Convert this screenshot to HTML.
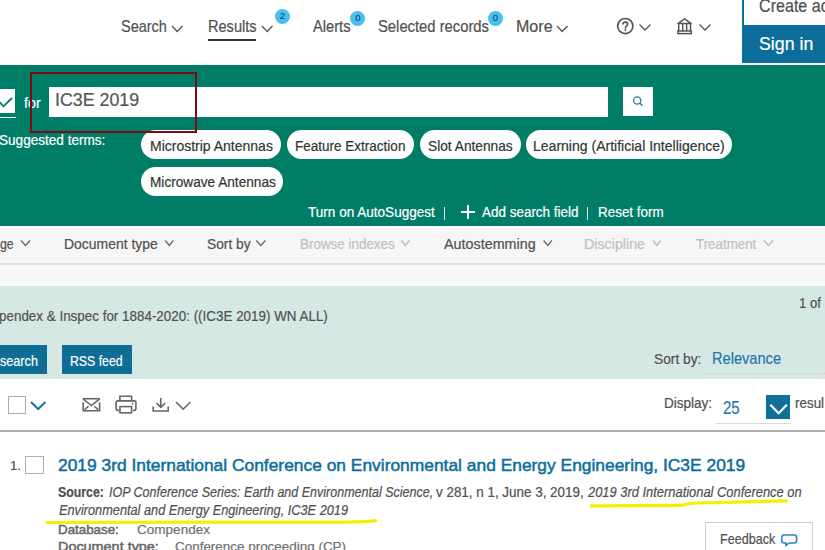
<!DOCTYPE html>
<html><head><meta charset="utf-8">
<style>
*{margin:0;padding:0;box-sizing:border-box}
html,body{width:825px;height:550px;overflow:hidden;background:#fff;font-family:"Liberation Sans",sans-serif}
.t{position:absolute;white-space:nowrap;transform-origin:0 0;-webkit-text-stroke:0.2px currentColor}
.b{position:absolute}
svg{position:absolute;overflow:visible}
.badge{position:absolute;width:15px;height:15px;border-radius:50%;background:#48c0ef;color:#1d3550;font-size:9.5px;line-height:14px;text-align:center}
.chip{position:absolute;height:30px;border-radius:15px;background:#fff}
</style></head><body>

<!-- ===== header ===== -->
<div class="b" style="left:208px;top:39px;width:48px;height:2px;background:#333"></div>
<svg style="left:0;top:0" width="825" height="64">
 <g fill="none" stroke="#555" stroke-width="1.3">
  <polyline points="172,26 177.2,31.5 182.5,26"/>
  <polyline points="262,26 267.2,31.5 272.5,26"/>
  <polyline points="557,26 562.2,31.5 567.5,26"/>
  <polyline points="639.5,24.5 645,30 650.5,24.5"/>
  <polyline points="699.5,24.5 705,30 710.5,24.5"/>
  <circle cx="625.3" cy="26.1" r="7.6" stroke-width="1.7"/>
  <path d="M623,24.4 Q623,22.2 625.4,22.2 Q627.7,22.2 627.7,24.3 Q627.7,25.6 626.4,26.3 Q625.4,26.9 625.4,28.4" stroke-width="1.7"/>
 </g>
 <circle cx="625.4" cy="30.1" r="1" fill="#555"/>
 <g fill="none" stroke="#555" stroke-width="1.5">
  <path d="M677.9,23.6 L684.6,18.8 L691.3,23.6 Z" stroke-linejoin="round"/>
  <line x1="678.7" y1="24" x2="678.7" y2="31"/>
  <line x1="682.7" y1="24" x2="682.7" y2="31"/>
  <line x1="686.6" y1="24" x2="686.6" y2="31"/>
  <line x1="690.5" y1="24" x2="690.5" y2="31"/>
  <rect x="677.9" y="31" width="13.4" height="2.6"/>
 </g>
</svg>
<div class="badge" style="left:274.9px;top:9.2px">2</div>
<div class="badge" style="left:350.3px;top:10.5px">0</div>
<div class="badge" style="left:488px;top:10.5px">0</div>

<div class="b" style="left:742.4px;top:0;width:83px;height:25px;background:#fff;border-left:2px solid #0c6d9a"></div>
<div class="b" style="left:742.4px;top:24.9px;width:83px;height:38.6px;background:#0c6d9a"></div>

<!-- ===== green band ===== -->
<div class="b" style="left:0;top:65px;width:825px;height:161px;background:#007d67"></div>
<div class="b" style="left:0;top:88.8px;width:15px;height:23.9px;background:#fff"></div>
<svg style="left:0;top:0" width="60" height="130">
 <polyline points="-1,101.5 3.5,106.3 12,98" fill="none" stroke="#007d67" stroke-width="1.8"/>
</svg>
<div class="b" style="left:0;top:116.7px;width:15.8px;height:1.8px;background:#fff"></div>
<div class="b" style="left:49.1px;top:87.2px;width:558.5px;height:29.6px;background:#fff"></div>
<div class="b" style="left:623.3px;top:87px;width:29.7px;height:29px;background:#fff"></div>
<svg style="left:0;top:0" width="700" height="130">
 <circle cx="637.2" cy="100.5" r="3.6" fill="none" stroke="#2c7f90" stroke-width="1.3"/>
 <line x1="639.8" y1="103.1" x2="642.5" y2="105.8" stroke="#2c7f90" stroke-width="1.4"/>
</svg>

<div class="chip" style="left:140.8px;top:130.1px;width:140.6px;height:29.3px"></div>
<div class="chip" style="left:286.7px;top:130.1px;width:127.5px;height:29.3px"></div>
<div class="chip" style="left:420.3px;top:130.1px;width:100.6px;height:29.3px"></div>
<div class="chip" style="left:525.5px;top:130.1px;width:206.7px;height:29.3px"></div>
<div class="chip" style="left:140.8px;top:166.8px;width:142.6px;height:29.3px"></div>

<div class="b" style="left:444px;top:206.5px;width:1.3px;height:13.4px;background:rgba(255,255,255,.85)"></div>
<div class="b" style="left:587.2px;top:206.5px;width:1.3px;height:13.4px;background:rgba(255,255,255,.85)"></div>
<div class="b" style="left:460.5px;top:211.3px;width:14.5px;height:1.8px;background:#fff"></div>
<div class="b" style="left:466.85px;top:205.4px;width:1.8px;height:13.3px;background:#fff"></div>

<!-- ===== filter bar ===== -->
<div class="b" style="left:0;top:226px;width:825px;height:37px;background:#f6f6f6"></div>
<div class="b" style="left:0;top:263.2px;width:825px;height:1.9px;background:#e2e0e2"></div>
<div class="b" style="left:0;top:265.1px;width:825px;height:20.5px;background:#f8f8f8"></div>
<svg style="left:0;top:0" width="825" height="270">
 <g fill="none" stroke="#666" stroke-width="1.3">
  <polyline points="21,240.5 25.5,245.5 30,240.5"/>
  <polyline points="165.3,240.5 169.3,245.5 173.3,240.5"/>
  <polyline points="256.3,240.5 260.8,245.5 265.4,240.5"/>
  <polyline points="543.6,240.5 547.7,245.5 551.8,240.5"/>
 </g>
 <g fill="none" stroke="#bbb" stroke-width="1.3">
  <polyline points="401.3,240.5 405.3,245.5 409.4,240.5"/>
  <polyline points="653,240.5 656.8,245.5 660.6,240.5"/>
  <polyline points="763.8,240.5 768.4,245.5 773,240.5"/>
 </g>
</svg>

<!-- ===== results header ===== -->
<div class="b" style="left:0;top:285.6px;width:825px;height:93.4px;background:#d5e8e3"></div>
<div class="b" style="left:0;top:345.2px;width:47.2px;height:29.2px;background:#0f6e95"></div>
<div class="b" style="left:61.9px;top:345.2px;width:70.1px;height:29.2px;background:#0f6e95"></div>
<div class="b" style="left:705px;top:373px;width:120px;height:1px;border-top:1px dotted #d8cbd0"></div>

<!-- ===== toolbar ===== -->
<div class="b" style="left:7.5px;top:396.2px;width:18.3px;height:18.1px;border:1.6px solid #aaa"></div>
<svg style="left:0;top:0" width="825" height="440">
 <polyline points="31,402 38.2,409 45.4,402" fill="none" stroke="#1a72a0" stroke-width="2"/>
 <g fill="none" stroke="#666" stroke-width="1.6">
  <path d="M82.6,398.7 H100"/>
  <polyline points="83.2,399.2 91.4,405.6 99.4,399.2"/>
  <path d="M83.2,402.2 V410.8 H99.6 V402.2"/>
  <line x1="84.6" y1="409.6" x2="88.4" y2="406.3"/>
  <line x1="98.2" y1="409.6" x2="94.4" y2="406.3"/>
  <path d="M119.9,400.3 V396.2 H131.6 V400.3"/>
  <path d="M119,410.4 H117.8 Q116.1,410.4 116.1,408.6 V402.6 Q116.1,400.9 117.8,400.9 H134.2 Q135.9,400.9 135.9,402.6 V408.6 Q135.9,410.4 134.2,410.4 H133"/>
  <rect x="120" y="406.6" width="11.6" height="6.2"/>
  <line x1="160.8" y1="398" x2="160.8" y2="407"/>
  <polyline points="156.5,403.2 160.8,407.3 165.1,403.2"/>
  <polyline points="153.2,406.6 153.2,411 168.2,411 168.2,406.6"/>
  <polyline points="176,402 183.2,409.2 190.4,402"/>
 </g>
 <circle cx="132.6" cy="403.5" r="0.9" fill="#666"/>
</svg>
<div class="b" style="left:766.3px;top:395.3px;width:24.1px;height:23.7px;background:#10709c"></div>
<svg style="left:0;top:0" width="825" height="440">
 <polyline points="770.3,404.8 778.6,413.2 786.9,404.8" fill="none" stroke="#fff" stroke-width="2.1"/>
</svg>
<div class="b" style="left:716px;top:423.1px;width:75.3px;height:1.4px;background:#dadada"></div>
<div class="b" style="left:0;top:429.7px;width:825px;height:2.1px;background:#acacac"></div>

<!-- ===== result ===== -->
<div class="b" style="left:25.1px;top:455.9px;width:18.5px;height:17.8px;border:1.5px solid #b0b0b0"></div>

<div class="b" style="left:704.8px;top:521.6px;width:108.7px;height:40px;border:1.6px solid #cfcfcf;background:#fff"></div>
<svg style="left:0;top:0" width="825" height="550">
 <path d="M784.8,535 H794.2 Q796.6,535 796.6,537.4 V540.6 Q796.6,543 794.2,543 H789 L785.8,545.6 L786,543 H784.2 Q781.8,543 781.8,540.6 V537.4 Q781.8,535 784.2,535 Z" fill="none" stroke="#2b87c0" stroke-width="1.6" stroke-linejoin="round"/>
</svg>

<div class="t" style="left:121.20px;top:19px;font-size:16px;line-height:16px;font-weight:400;font-style:normal;color:#505050;transform:scaleX(0.9041)">Search</div>
<div class="t" style="left:208.19px;top:19px;font-size:16px;line-height:16px;font-weight:400;font-style:normal;color:#505050;transform:scaleX(0.9096)">Results</div>
<div class="t" style="left:312.70px;top:19px;font-size:16px;line-height:16px;font-weight:400;font-style:normal;color:#505050;transform:scaleX(0.9171)">Alerts</div>
<div class="t" style="left:377.58px;top:19px;font-size:16px;line-height:16px;font-weight:400;font-style:normal;color:#505050;transform:scaleX(0.9244)">Selected records</div>
<div class="t" style="left:515.70px;top:19px;font-size:16px;line-height:16px;font-weight:400;font-style:normal;color:#505050;transform:scaleX(1.0029)">More</div>
<div class="t" style="left:758.98px;top:-2px;font-size:17.5px;line-height:17.5px;font-weight:400;font-style:normal;color:#505050;transform:scaleX(0.9200)">Create account</div>
<div class="t" style="left:758.91px;top:35px;font-size:18px;line-height:18px;font-weight:400;font-style:normal;color:#ffffff;transform:scaleX(0.9868)">Sign in</div>
<div class="t" style="left:23.70px;top:96px;font-size:14.5px;line-height:14.5px;font-weight:400;font-style:normal;color:#ffffff;transform:scaleX(0.9882)">for</div>
<div class="t" style="left:54.56px;top:90px;font-size:19px;line-height:19px;font-weight:400;font-style:normal;color:#555555;transform:scaleX(0.9364)">IC3E 2019</div>
<div class="t" style="left:-0.67px;top:133px;font-size:14px;line-height:14px;font-weight:400;font-style:normal;color:#ffffff;transform:scaleX(0.9694)">Suggested terms:</div>
<div class="t" style="left:149.57px;top:138px;font-size:15px;line-height:15px;font-weight:400;font-style:normal;color:#333333;transform:scaleX(0.9328)">Microstrip Antennas</div>
<div class="t" style="left:294.90px;top:138px;font-size:15px;line-height:15px;font-weight:400;font-style:normal;color:#333333;transform:scaleX(0.9008)">Feature Extraction</div>
<div class="t" style="left:427.58px;top:138px;font-size:15px;line-height:15px;font-weight:400;font-style:normal;color:#333333;transform:scaleX(0.9154)">Slot Antennas</div>
<div class="t" style="left:533.27px;top:138px;font-size:15px;line-height:15px;font-weight:400;font-style:normal;color:#333333;transform:scaleX(0.9350)">Learning (Artificial Intelligence)</div>
<div class="t" style="left:149.59px;top:174px;font-size:15px;line-height:15px;font-weight:400;font-style:normal;color:#333333;transform:scaleX(0.9088)">Microwave Antennas</div>
<div class="t" style="left:308.00px;top:204px;font-size:15px;line-height:15px;font-weight:400;font-style:normal;color:#ffffff;transform:scaleX(0.9035)">Turn on AutoSuggest</div>
<div class="t" style="left:482.20px;top:204px;font-size:15px;line-height:15px;font-weight:400;font-style:normal;color:#ffffff;transform:scaleX(0.8972)">Add search field</div>
<div class="t" style="left:597.60px;top:204px;font-size:15px;line-height:15px;font-weight:400;font-style:normal;color:#ffffff;transform:scaleX(0.8958)">Reset form</div>
<div class="t" style="left:0.00px;top:237px;font-size:14.5px;line-height:14.5px;font-weight:400;font-style:normal;color:#505050;transform:scaleX(0.8500)">ge</div>
<div class="t" style="left:63.84px;top:237px;font-size:14.5px;line-height:14.5px;font-weight:400;font-style:normal;color:#505050;transform:scaleX(0.9615)">Document type</div>
<div class="t" style="left:206.75px;top:237px;font-size:14.5px;line-height:14.5px;font-weight:400;font-style:normal;color:#505050;transform:scaleX(0.9511)">Sort by</div>
<div class="t" style="left:299.57px;top:237px;font-size:14.5px;line-height:14.5px;font-weight:400;font-style:normal;color:#c2bfc2;transform:scaleX(0.9257)">Browse indexes</div>
<div class="t" style="left:443.80px;top:237px;font-size:14.5px;line-height:14.5px;font-weight:400;font-style:normal;color:#505050;transform:scaleX(0.9891)">Autostemming</div>
<div class="t" style="left:584.32px;top:237px;font-size:14.5px;line-height:14.5px;font-weight:400;font-style:normal;color:#c2bfc2;transform:scaleX(0.9836)">Discipline</div>
<div class="t" style="left:695.50px;top:237px;font-size:14.5px;line-height:14.5px;font-weight:400;font-style:normal;color:#c2bfc2;transform:scaleX(0.9197)">Treatment</div>
<div class="t" style="left:-0.59px;top:308px;font-size:15px;line-height:15px;font-weight:400;font-style:normal;color:#505050;transform:scaleX(0.8943)">pendex &amp; Inspec for 1884-2020: ((IC3E 2019) WN ALL)</div>
<div class="t" style="left:799.40px;top:296px;font-size:14.5px;line-height:14.5px;font-weight:400;font-style:normal;color:#505050;transform:scaleX(0.9042)">1 of</div>
<div class="t" style="left:0.30px;top:353px;font-size:15px;line-height:15px;font-weight:400;font-style:normal;color:#ffffff;transform:scaleX(0.8422)">search</div>
<div class="t" style="left:70.08px;top:353px;font-size:15px;line-height:15px;font-weight:400;font-style:normal;color:#ffffff;transform:scaleX(0.8190)">RSS feed</div>
<div class="t" style="left:654.28px;top:351px;font-size:15px;line-height:15px;font-weight:400;font-style:normal;color:#505050;transform:scaleX(0.9160)">Sort by:</div>
<div class="t" style="left:712.04px;top:350px;font-size:17px;line-height:17px;font-weight:400;font-style:normal;color:#1f78a6;transform:scaleX(0.8595)">Relevance</div>
<div class="t" style="left:664.33px;top:396px;font-size:14px;line-height:14px;font-weight:400;font-style:normal;color:#505050;transform:scaleX(0.9667)">Display:</div>
<div class="t" style="left:723.44px;top:400px;font-size:17.5px;line-height:17.5px;font-weight:400;font-style:normal;color:#1f78a6;transform:scaleX(0.8556)">25</div>
<div class="t" style="left:795.24px;top:396px;font-size:14px;line-height:14px;font-weight:400;font-style:normal;color:#505050;transform:scaleX(0.9586)">resul</div>
<div class="t" style="left:9.69px;top:459px;font-size:13px;line-height:13px;font-weight:400;font-style:normal;color:#505050;transform:scaleX(1.0111)">1.</div>
<div class="t" style="left:57.80px;top:457px;font-size:17px;line-height:17px;font-weight:400;font-style:normal;color:#0f6e9c;-webkit-text-stroke:0.5px #0f6e9c;transform:scaleX(1.0226)">2019 3rd International Conference on Environmental and Energy Engineering, IC3E 2019</div>
<div class="t" style="left:58.10px;top:485px;font-size:14px;line-height:14px;font-weight:700;font-style:normal;color:#505050;transform:scaleX(0.8804)">Source:</div>
<div class="t" style="left:109.20px;top:485px;font-size:14px;line-height:14px;font-weight:400;font-style:italic;color:#505050;transform:scaleX(0.8931)">IOP Conference Series: Earth and Environmental Science,</div>
<div class="t" style="left:436.40px;top:485px;font-size:14px;line-height:14px;font-weight:400;font-style:normal;color:#505050;transform:scaleX(0.9582)">v 281, n 1, June 3, 2019,</div>
<div class="t" style="left:587.90px;top:485px;font-size:14px;line-height:14px;font-weight:400;font-style:italic;color:#505050;transform:scaleX(0.9211)">2019 3rd International Conference on</div>
<div class="t" style="left:58.50px;top:503px;font-size:14px;line-height:14px;font-weight:400;font-style:italic;color:#505050;transform:scaleX(0.9101)">Environmental and Energy Engineering, IC3E 2019</div>
<div class="t" style="left:57.71px;top:523px;font-size:13.5px;line-height:13.5px;font-weight:400;font-style:normal;color:#666666;-webkit-text-stroke:0.5px #666666;transform:scaleX(0.9883)">Database:</div>
<div class="t" style="left:136.50px;top:523px;font-size:13.5px;line-height:13.5px;font-weight:400;font-style:normal;color:#707070;transform:scaleX(1.0027)">Compendex</div>
<div class="t" style="left:57.63px;top:540px;font-size:13.5px;line-height:13.5px;font-weight:400;font-style:normal;color:#666666;-webkit-text-stroke:0.5px #666666;transform:scaleX(1.0667)">Document type:</div>
<div class="t" style="left:174.50px;top:540px;font-size:13.5px;line-height:13.5px;font-weight:400;font-style:normal;color:#707070;transform:scaleX(0.9953)">Conference proceeding (CP)</div>
<div class="t" style="left:720.13px;top:532px;font-size:14.5px;line-height:14.5px;font-weight:400;font-style:normal;color:#505050;transform:scaleX(0.8683)">Feedback</div>
<svg style="left:0;top:0" width="825" height="550">
 <path d="M45.8,522.5 C120,522.3 250,522 340,522.1 C360,522 370,521.6 377,520.6" fill="none" stroke="#f4f000" stroke-width="3.2" stroke-linecap="butt"/>
 <path d="M590.2,505.9 C630,505.8 665,505.7 681.8,505.4 C685,504 690,503.3 700,503 C730,502.2 760,501.5 787.5,500.8" fill="none" stroke="#f4f000" stroke-width="3.2" stroke-linecap="butt"/>
</svg>

<div class="b" style="left:29.9px;top:72.2px;width:167px;height:60.4px;border:2.8px solid #7c0c10"></div>

</body></html>
